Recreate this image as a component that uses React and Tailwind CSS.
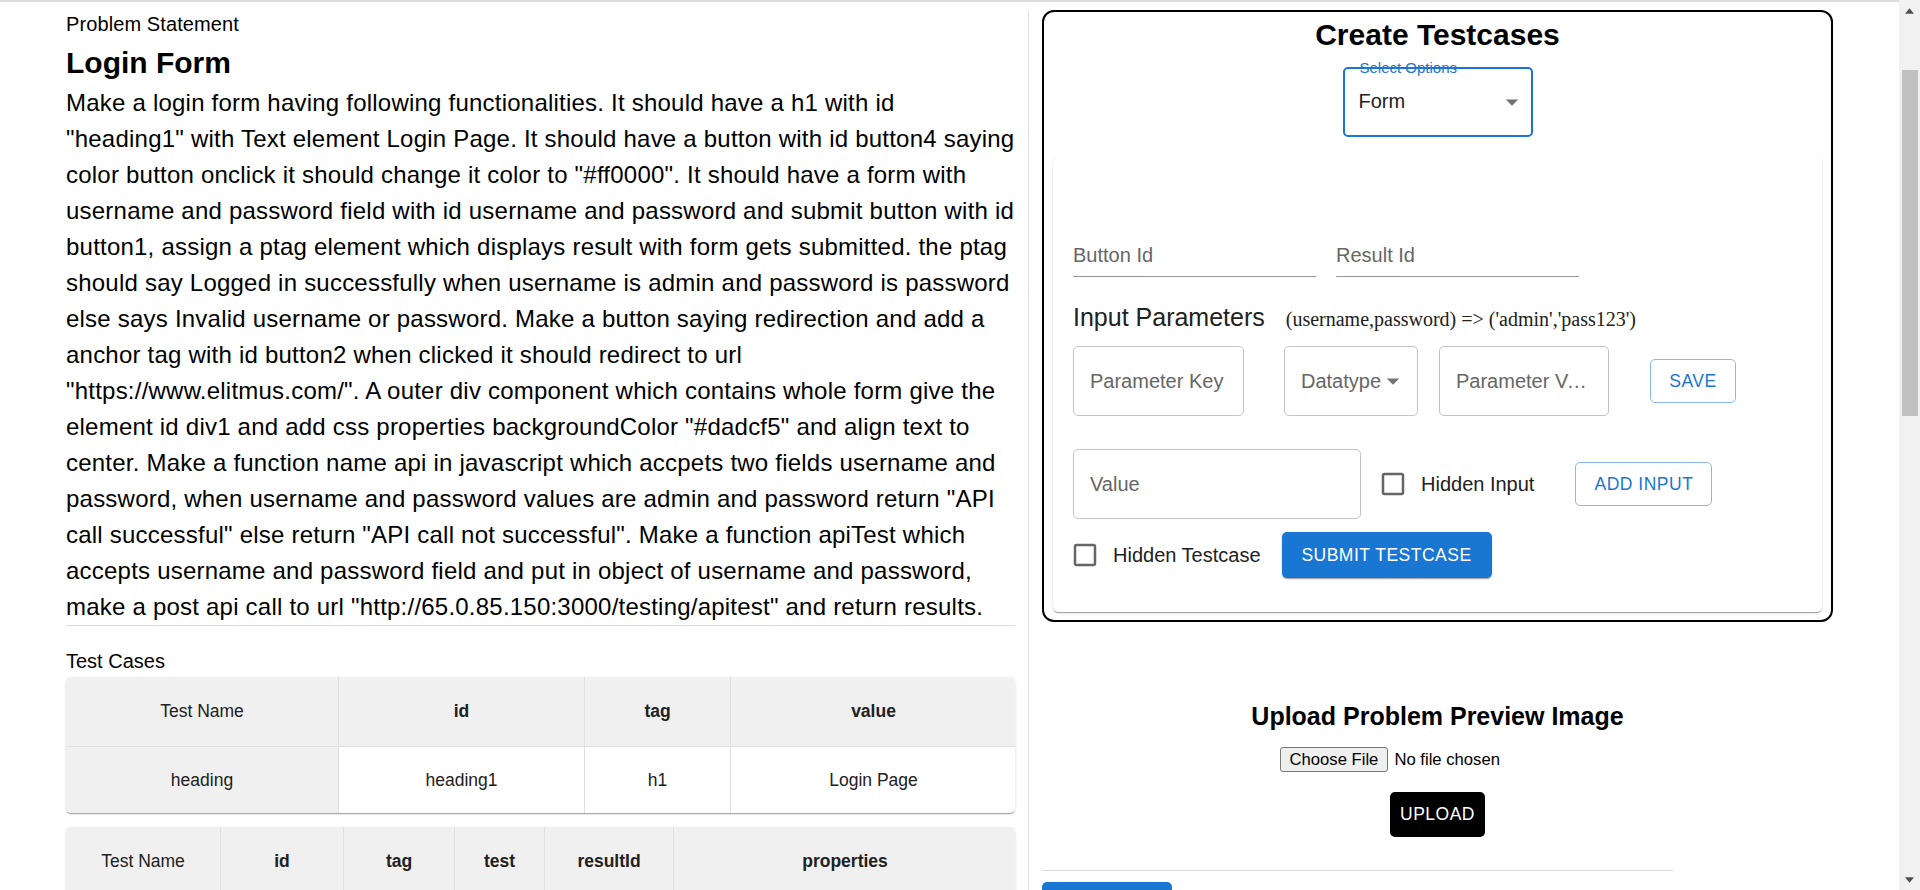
import React from 'react';

const paper =
  'shadow-[0_2px_1px_-1px_rgba(0,0,0,0.2),0_1px_1px_0_rgba(0,0,0,0.14),0_1px_3px_0_rgba(0,0,0,0.12)]';

// line breaks follow the original page's wrapping
const problemLines = [
  'Make a login form having following functionalities. It should have a h1 with id',
  '"heading1" with Text element Login Page. It should have a button with id button4 saying',
  'color button onclick it should change it color to "#ff0000". It should have a form with',
  'username and password field with id username and password and submit button with id',
  'button1, assign a ptag element which displays result with form gets submitted. the ptag',
  'should say Logged in successfully when username is admin and password is password',
  'else says Invalid username or password. Make a button saying redirection and add a',
  'anchor tag with id button2 when clicked it should redirect to url',
  '"https://www.elitmus.com/". A outer div component which contains whole form give the',
  'element id div1 and add css properties backgroundColor "#dadcf5" and align text to',
  'center. Make a function name api in javascript which accpets two fields username and',
  'password, when username and password values are admin and password return "API',
  'call successful" else return "API call not successful". Make a function apiTest which',
  'accepts username and password field and put in object of username and password,',
  'make a post api call to url "http://65.0.85.150:3000/testing/apitest" and return results.',
];

function ArrowDrop({ className = '' }) {
  return (
    <svg viewBox="0 0 24 24" className={`w-[30px] h-[30px] fill-[#757575] shrink-0 ${className}`}>
      <path d="M7 10l5 5 5-5z" />
    </svg>
  );
}

function CheckboxIcon({ className = '' }) {
  return (
    <svg viewBox="0 0 24 24" className={`w-[30px] h-[30px] fill-[#666666] shrink-0 ${className}`}>
      <path d="M19 5v14H5V5h14m0-2H5c-1.11 0-2 .9-2 2v14c0 1.1.89 2 2 2h14c1.1 0 2-.9 2-2V5c0-1.1-.9-2-2-2z" />
    </svg>
  );
}

function UnderlineField({ label }) {
  return (
    <div className="w-[243px] pb-[9px] border-b border-[#949494] text-[20px] leading-[24px] text-[#666666]">
      {label}
    </div>
  );
}

function OutlineBtn({ children, className = '' }) {
  return (
    <button
      className={`h-[44px] border border-[#8cbae8] rounded-[5px] text-[#1976d2] text-[17.5px] tracking-[0.5px] uppercase flex items-center justify-center ${className}`}
    >
      {children}
    </button>
  );
}

function TestTable1() {
  const head = 'h-[70px] flex items-center justify-center bg-[#f0f0f0] border-b border-[#e0e0e0]';
  const cell = 'h-[66px] flex items-center justify-center';
  return (
    <div className={`mt-[4px] rounded-[5px] overflow-hidden ${paper} grid grid-cols-[273px_246px_146px_285px] text-[17.5px] text-[#212121]`}>
      <div className={`${head} border-r`}>Test Name</div>
      <div className={`${head} border-r font-bold`}>id</div>
      <div className={`${head} border-r font-bold`}>tag</div>
      <div className={`${head} font-bold`}>value</div>
      <div className={`${cell} bg-[#f0f0f0] border-r border-[#e0e0e0]`}>heading</div>
      <div className={`${cell} border-r border-[#e0e0e0]`}>heading1</div>
      <div className={`${cell} border-r border-[#e0e0e0]`}>h1</div>
      <div className={cell}>Login Page</div>
    </div>
  );
}

function TestTable2() {
  const head = 'h-[70px] flex items-center justify-center bg-[#f0f0f0] border-b border-[#e0e0e0]';
  const cell = 'h-[66px] flex items-center justify-center px-2 text-center';
  return (
    <div className={`mt-[14px] mb-[40px] rounded-[5px] overflow-hidden ${paper} grid grid-cols-[155px_123px_111px_90px_129px_342px] text-[17.5px] text-[#212121]`}>
      <div className={`${head} border-r`}>Test Name</div>
      <div className={`${head} border-r font-bold`}>id</div>
      <div className={`${head} border-r font-bold`}>tag</div>
      <div className={`${head} border-r font-bold`}>test</div>
      <div className={`${head} border-r font-bold`}>resultId</div>
      <div className={`${head} font-bold`}>properties</div>
      <div className={`${cell} bg-[#f0f0f0] border-r border-[#e0e0e0]`}>color button</div>
      <div className={`${cell} border-r border-[#e0e0e0]`}>button4</div>
      <div className={`${cell} border-r border-[#e0e0e0]`}>button</div>
      <div className={`${cell} border-r border-[#e0e0e0]`}>click</div>
      <div className={`${cell} border-r border-[#e0e0e0]`}>button4</div>
      <div className={cell}>color: #ff0000</div>
    </div>
  );
}

function CreateTestcases() {
  return (
    <div className="w-[791px] border-2 border-black rounded-[12px] px-[9px] pb-[8px]">
      <h2 className="mt-[5px] text-center text-[30px] leading-[36px] font-bold text-black">Create Testcases</h2>

      <div className="relative mt-[14px] mx-auto w-[190px] h-[70px] border-2 border-[#1976d2] rounded-[5px] flex items-center pl-[14px] pr-[4px]">
        <span className="absolute left-[15px] top-[-10px] text-[15px] leading-[18px] text-[#1976d2]">Select Options</span>
        <span className="flex-1 text-[20px] leading-[24px] text-[#212121] -mt-[2px]">Form</span>
        <ArrowDrop />
      </div>

      <div className={`mt-[20px] rounded-[5px] bg-white ${paper} px-[20px] pt-[86px] pb-[34px]`}>
        <div className="flex gap-[20px]">
          <UnderlineField label="Button Id" />
          <UnderlineField label="Result Id" />
        </div>

        <div className="mt-[25px] h-[30px] flex items-baseline">
          <span className="text-[25px] leading-[30px] text-[#212121]">Input Parameters</span>
          <span className="ml-[21px] font-['Liberation_Serif','Times_New_Roman',serif] text-[20px] leading-[24px] text-[#212121]">
            (username,password) =&gt; ('admin','pass123')
          </span>
        </div>

        <div className="mt-[14px] flex items-center text-[20px] text-[#666666]">
          <div className="w-[171px] h-[70px] border border-[#c4c4c4] rounded-[5px] flex items-center pl-[16px]">Parameter Key</div>
          <div className="ml-[40px] w-[134px] h-[70px] border border-[#c4c4c4] rounded-[5px] flex items-center pl-[16px]">
            <span>Datatype</span>
            <ArrowDrop className="-ml-[3px]" />
          </div>
          <div className="ml-[21px] w-[170px] h-[70px] border border-[#c4c4c4] rounded-[5px] flex items-center pl-[16px]">
            <span className="block w-[136px] overflow-hidden text-ellipsis whitespace-nowrap">Parameter Value</span>
          </div>
          <OutlineBtn className="ml-[41px] w-[86px]">Save</OutlineBtn>
        </div>

        <div className="mt-[33px] flex items-center">
          <div className="w-[288px] h-[70px] border border-[#c4c4c4] rounded-[5px] flex items-center pl-[16px] text-[20px] text-[#666666]">Value</div>
          <CheckboxIcon className="ml-[17px]" />
          <span className="ml-[13px] text-[20px] text-[#212121]">Hidden Input</span>
          <OutlineBtn className="ml-[41px] w-[137px]">Add Input</OutlineBtn>
        </div>

        <div className="mt-[13px] flex items-center h-[46px]">
          <CheckboxIcon className="-ml-[3px]" />
          <span className="ml-[13px] text-[20px] text-[#212121]">Hidden Testcase</span>
          <button className={`ml-[21px] w-[210px] h-[46px] rounded-[5px] bg-[#1976d2] text-white text-[17.5px] tracking-[0.5px] uppercase ${paper}`}>
            Submit Testcase
          </button>
        </div>
      </div>
    </div>
  );
}

function UploadSection() {
  return (
    <div className="w-[791px] flex flex-col items-center">
      <h3 className="mt-[79px] text-[25px] leading-[30px] font-bold text-black">Upload Problem Preview Image</h3>
      <div className="mt-[16px] w-[316px] h-[25px] flex items-center text-[16.67px] text-black">
        <span className="h-[25px] px-[9px] flex items-center bg-[#efefef] border border-[#767676] rounded-[3px]">Choose File</span>
        <span className="ml-[6px]">No file chosen</span>
      </div>
      <button className="mt-[20px] w-[95px] h-[45px] rounded-[5px] bg-black text-white text-[17.5px] tracking-[0.5px]">UPLOAD</button>
      <div className="self-start mt-[33px] w-[632px] border-t border-[#dddddd]"></div>
      <button className="self-start mt-[11px] w-[130px] h-[45px] rounded-[5px] bg-[#1976d2] text-white text-[17.5px] tracking-[0.5px] mb-[40px]">
        SUBMIT
      </button>
    </div>
  );
}

// browser scrollbar as seen in the original capture
function FakeScrollbar() {
  return (
    <div className="fixed right-0 top-0 w-[21px] h-screen bg-[#f1f1f1] flex flex-col items-center">
      <div className="h-[21px] w-full flex items-center justify-center">
        <svg viewBox="0 0 10 6" className="w-[9px] h-[6px] fill-[#505050]"><path d="M5 0l5 6H0z" /></svg>
      </div>
      <div className="mt-[49px] w-[16px] h-[346px] bg-[#c1c1c1]"></div>
      <div className="mt-auto h-[21px] w-full flex items-center justify-center">
        <svg viewBox="0 0 10 6" className="w-[9px] h-[6px] fill-[#505050]"><path d="M0 0h10L5 6z" /></svg>
      </div>
    </div>
  );
}

export default function App() {
  return (
    <div className="min-h-screen bg-white border-t-2 border-[#dcdcdc] font-['Liberation_Sans',Arial,sans-serif] text-black">
      <div className="flex pt-[8px]">
        <div className="w-[1029px] shrink-0 pl-[66px] pr-[13px] border-r border-[#e0e0e0]">
          <p className="pt-[2px] text-[20px] leading-[24px] tracking-[0.1px]">Problem Statement</p>
          <h1 className="mt-[9px] text-[30px] leading-[36px] font-bold">Login Form</h1>
          <p className="mt-[4px] text-[24px] leading-[36px] tracking-[0.22px] border-b border-[#dddddd]">
            {problemLines.map((line) => (
              <span key={line} className="block whitespace-nowrap">{line}</span>
            ))}
          </p>
          <p className="mt-[23px] text-[20px] leading-[24px]">Test Cases</p>
          <TestTable1 />
          <TestTable2 />
        </div>
        <div className="pl-[13px]">
          <CreateTestcases />
          <UploadSection />
        </div>
      </div>
      <FakeScrollbar />
    </div>
  );
}
